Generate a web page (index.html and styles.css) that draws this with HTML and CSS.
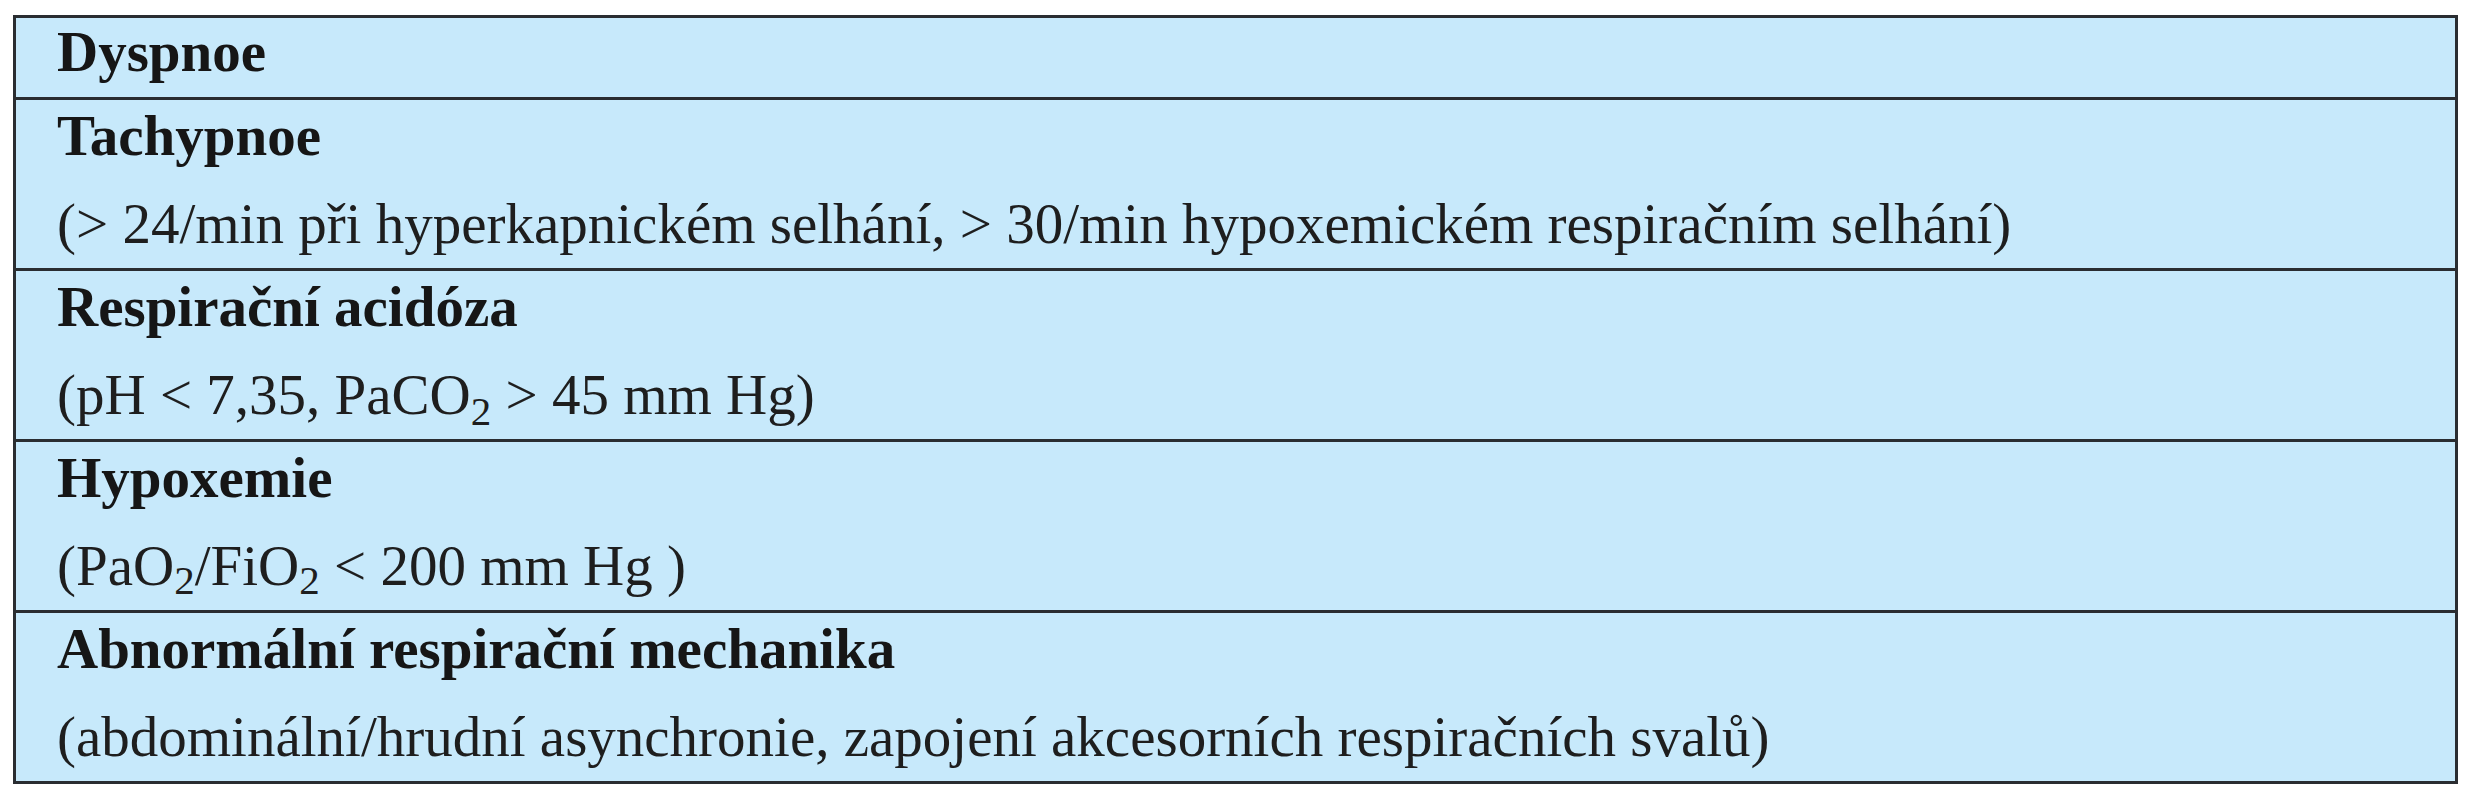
FILE: index.html
```html
<!DOCTYPE html>
<html lang="cs">
<head>
<meta charset="utf-8">
<title>Dyspnoe</title>
<link rel="stylesheet" href="styles.css">
</head>
<body>
<div class="table">
  <div class="row row-single">
    <div class="title">Dyspnoe</div>
  </div>
  <div class="row">
    <div class="title">Tachypnoe</div>
    <div class="note">(&gt; 24/min při hyperkapnickém selhání, &gt; 30/min hypoxemickém respiračním selhání)</div>
  </div>
  <div class="row">
    <div class="title">Respirační acidóza</div>
    <div class="note">(pH &lt; 7,35, PaCO<sub class="low">2</sub> &gt; 45 mm Hg)</div>
  </div>
  <div class="row">
    <div class="title">Hypoxemie</div>
    <div class="note">(PaO<sub>2</sub>/FiO<sub>2</sub> &lt; 200 mm Hg )</div>
  </div>
  <div class="row">
    <div class="title">Abnormální respirační mechanika</div>
    <div class="note">(abdominální/hrudní asynchronie, zapojení akcesorních respiračních svalů)</div>
  </div>
</div>
</body>
</html>
```
FILE: styles.css
```css
html, body {
  margin: 0;
  padding: 0;
  background: #ffffff;
}

body {
  padding: 15px 0 0 13px;
  font-family: "Liberation Serif", "Times New Roman", serif;
  font-size: 57px;
  color: #1c1c1c;
}

.table {
  width: 2445px;
  box-sizing: border-box;
  border: 3px solid #2a2d31;
  background: #c7e9fb;
  display: flex;
  flex-direction: column;
}

.row {
  height: 168px;
  box-sizing: border-box;
  padding-left: 41px;
}

.row + .row {
  border-top: 3px solid #2a2d31;
  height: 171px;
}

.row-single {
  height: 79px;
}

.title {
  font-weight: 700;
  line-height: 72px;
  color: #161616;
}

.row-single .title {
  line-height: 68px;
}

.note {
  margin-top: 7px;
  line-height: 89px;
  color: #1e1e1e;
}

sub {
  font-size: 0.72em;
  line-height: 0;
  vertical-align: -0.22em;
}

sub.low {
  vertical-align: -0.28em;
}
```
